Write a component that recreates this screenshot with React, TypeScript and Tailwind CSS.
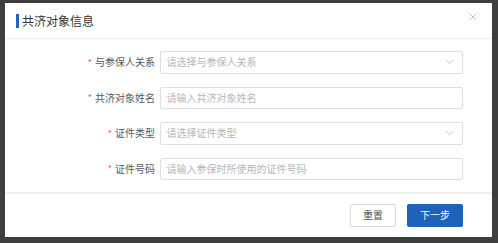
import React from "react";

const font = { fontFamily: '"Noto Sans CJK SC", "Noto Sans", sans-serif' };

function Chevron() {
  return (
    <svg width="9" height="6" viewBox="0 0 9 6" className="shrink-0">
      <path d="M1 1 L4.5 4.5 L8 1" fill="none" stroke="#c6c9cf" strokeWidth="1" />
    </svg>
  );
}

function Row({ label, placeholder, select }: { label: string; placeholder: string; select?: boolean }) {
  return (
    <div className="flex items-center h-[22.5px]">
      <div className="w-[154.5px] pr-[4.5px] flex items-center justify-end text-[10px] text-[#555a60] leading-none">
        <span className="text-[#f05a5a] text-[9px] mr-[3px]">*</span>
        <span>{label}</span>
      </div>
      <div className="flex-1 h-full border border-[#dcdfe3] rounded-[2px] flex items-center justify-between pl-[6px] pr-[8px] text-[10px] text-[#b3b6bb] leading-none">
        <span>{placeholder}</span>
        {select && <Chevron />}
      </div>
    </div>
  );
}

export default function App() {
  return (
    <div style={font} className="w-[498px] h-[243px] bg-[#3e3e3e] pt-[3px] pl-[5px] pr-[6px] pb-[6px]">
      <div className="w-full h-full bg-white flex flex-col">
        <div className="h-[36px] flex items-center pl-[11px] pr-[15px] justify-between border-b border-[#ececec]">
          <div className="flex items-center">
            <div className="w-[3px] h-[14px] bg-[#1f63c0] mr-[3px]" />
            <span className="text-[12px] text-[#333] leading-none">共济对象信息</span>
          </div>
          <svg width="8" height="8" viewBox="0 0 8 8" className="mt-[-8px]">
            <path d="M0.5 0.5 L7.5 7.5 M7.5 0.5 L0.5 7.5" stroke="#c0c6d2" strokeWidth="1" />
          </svg>
        </div>
        <div className="flex flex-col gap-[13px] pt-[12px] pb-[11.5px] pr-[29px] border-b-2 border-[#f0f0f0]">
          <Row label="与参保人关系" placeholder="请选择与参保人关系" select />
          <Row label="共济对象姓名" placeholder="请输入共济对象姓名" />
          <Row label="证件类型" placeholder="请选择证件类型" select />
          <Row label="证件号码" placeholder="请输入参保时所使用的证件号码" />
        </div>
        <div className="flex-1 flex items-center justify-end gap-[11px] pr-[29px]">
          <button className="w-[46px] h-[23px] border border-[#d8dadd] rounded-[2px] bg-white text-[10px] text-[#555] leading-none">
            重置
          </button>
          <button className="w-[56px] h-[23px] rounded-[2px] bg-[#1d63bc] text-[10px] text-white leading-none">
            下一步
          </button>
        </div>
      </div>
    </div>
  );
}
